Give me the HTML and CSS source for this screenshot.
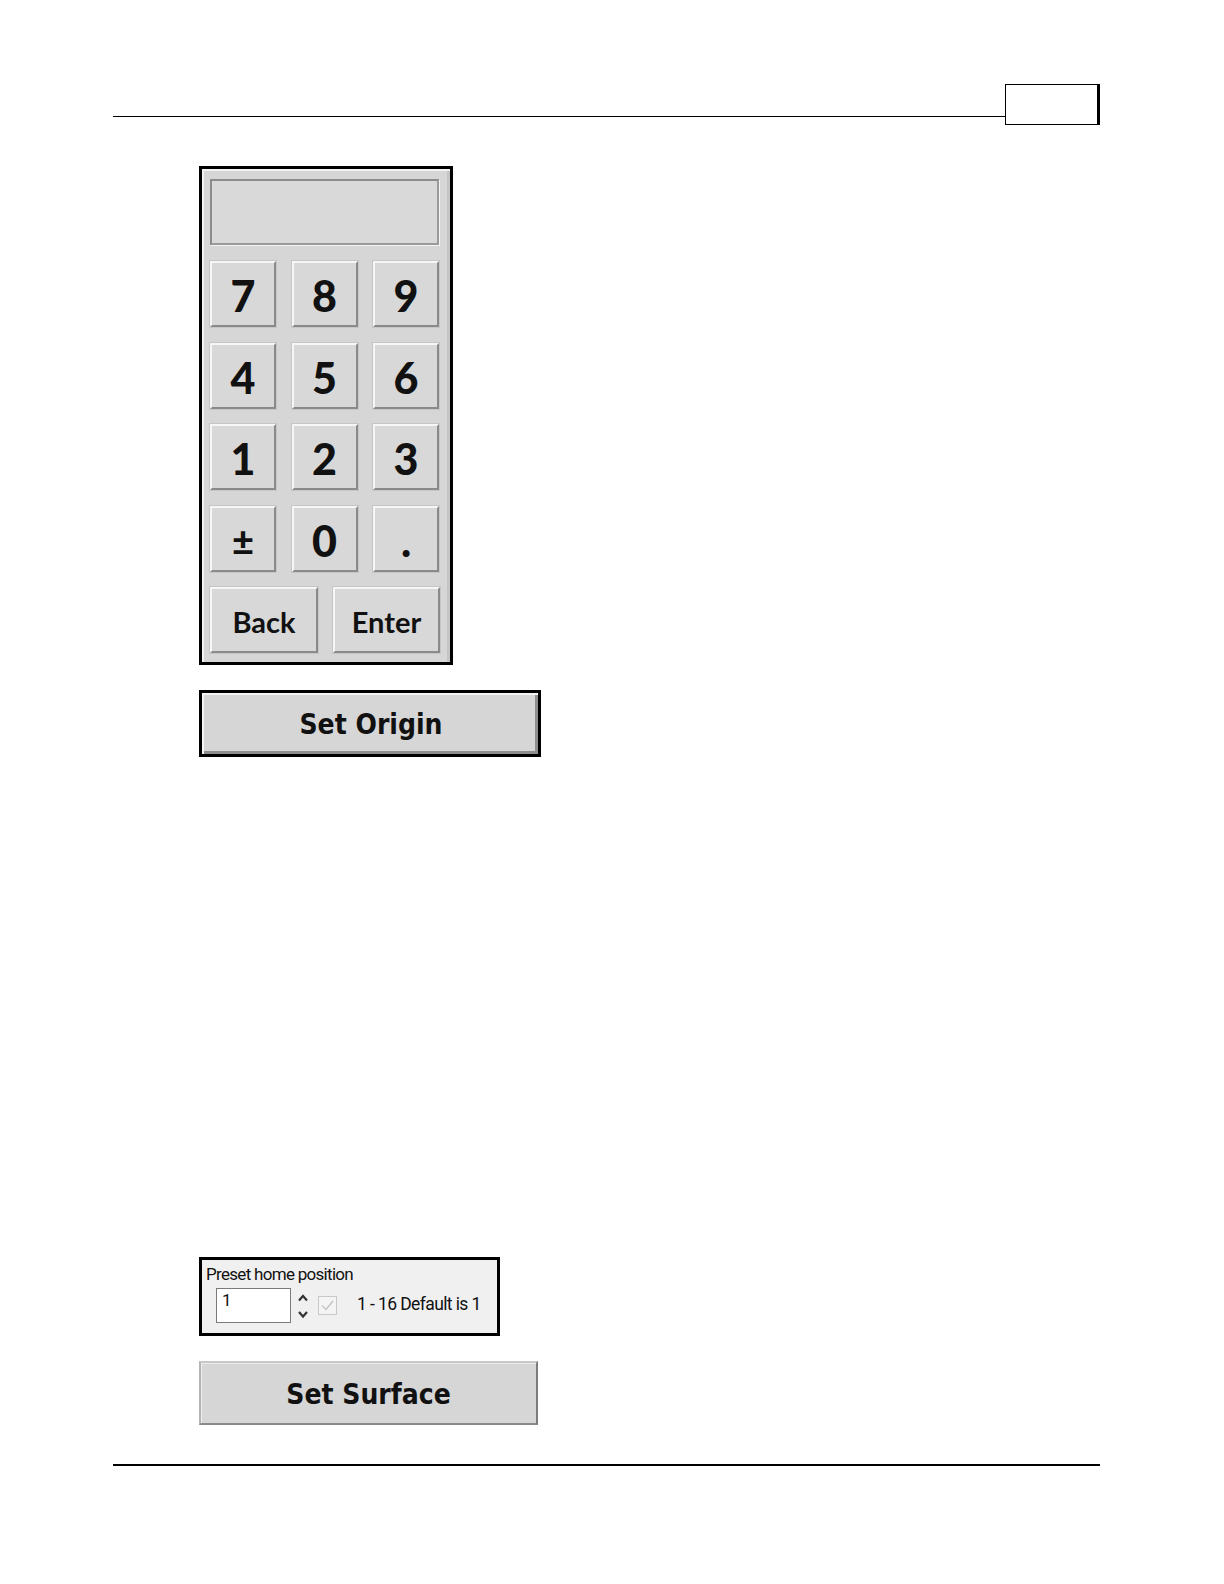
FILE: index.html
```html
<!DOCTYPE html>
<html>
<head>
<meta charset="utf-8">
<link rel="stylesheet" href="styles.css">
</head>
<body>
<div class="page">
  <header class="header">
    <div class="header-line"></div>
    <div class="header-box"></div>
  </header>

  <main class="content">
    <div class="keypad">
      <div class="display"></div>
      <div class="keys">
        <div class="key">7</div>
        <div class="key">8</div>
        <div class="key">9</div>
        <div class="key">4</div>
        <div class="key">5</div>
        <div class="key">6</div>
        <div class="key">1</div>
        <div class="key">2</div>
        <div class="key">3</div>
        <div class="key key-pm">±</div>
        <div class="key">0</div>
        <div class="key">.</div>
      </div>
      <div class="actions">
        <div class="key key-word">Back</div>
        <div class="key key-word">Enter</div>
      </div>
    </div>

    <div class="big-button origin">Set Origin</div>

    <div class="preset">
      <div class="preset-label">Preset home position</div>
      <div class="preset-row">
        <div class="preset-input">1</div>
        <div class="spin">
          <svg width="12" height="30" viewBox="0 0 12 30">
            <path d="M2 9.5 L6 5 L10 9.5" fill="none" stroke="#333" stroke-width="2.2"/>
            <path d="M2 21 L6 25.5 L10 21" fill="none" stroke="#333" stroke-width="2.2"/>
          </svg>
        </div>
        <div class="checkbox">
          <svg width="17" height="17" viewBox="0 0 17 17">
            <path d="M3 8.5 L7 12.5 L14 4" fill="none" stroke="#c4c4c4" stroke-width="1.4"/>
          </svg>
        </div>
        <div class="preset-hint">1 - 16 Default is 1</div>
      </div>
    </div>

    <div class="big-button surface">Set Surface</div>
  </main>

  <footer class="footer"></footer>
</div>
</body>
</html>
```

FILE: styles.css
```css
html, body {
  margin: 0;
  padding: 0;
  background: #ffffff;
  width: 1224px;
  height: 1584px;
  overflow: hidden;
}

.page {
  width: 1224px;
  height: 1584px;
  position: relative;
  overflow: hidden;
  font-family: "Lato", "Liberation Sans", sans-serif;
}

.header {
  display: flex;
  align-items: flex-start;
  padding-top: 84px;
  padding-left: 113px;
}

.header-line {
  width: 892px;
  height: 32px;
  border-bottom: 1.5px solid #000;
}

.header-box {
  width: 91px;
  height: 39px;
  border: 1.5px solid #000;
  border-right-width: 3px;
}

.content {
  margin-left: 199px;
  margin-top: 41px;
  display: flex;
  flex-direction: column;
  align-items: flex-start;
}

.keypad {
  box-sizing: border-box;
  width: 254px;
  height: 499px;
  border: 3px solid #000;
  background: #d6d6d6;
  box-shadow: inset 2px 2px 0 #f2f2f2, inset -3px 0 0 #c4c4c4;
  padding: 10px 11px 0 8px;
}

.display {
  width: 229px;
  height: 66px;
  box-sizing: border-box;
  border: 2px solid #8c8c8c;
  border-right-color: #9a9a9a;
  border-bottom-color: #9a9a9a;
  background: #d9d9d9;
  box-shadow: 1px 1px 0 #f4f4f4;
}

.keys {
  display: grid;
  grid-template-columns: 66px 66px 66px;
  grid-auto-rows: 66px;
  column-gap: 15.5px;
  row-gap: 15.7px;
  margin-top: 16px;
}

.key {
  box-sizing: border-box;
  display: flex;
  align-items: center;
  justify-content: center;
  background: #d8d8d8;
  border: 2px solid;
  border-color: #f6f6f6 #8a8a8a #8a8a8a #f6f6f6;
  box-shadow: 0 0 0 1px #c6c6c6;
  font-family: "Lato", "Liberation Sans", sans-serif;
  font-weight: 900;
  font-size: 43px;
  color: #111111;
  line-height: 1;
  padding-top: 3px;
}

.key-pm {
  font-size: 38px;
}

.actions {
  display: grid;
  grid-template-columns: 108px 107px;
  column-gap: 15px;
  grid-auto-rows: 66px;
  margin-top: 15px;
}

.key-word {
  font-size: 29px;
  font-weight: 700;
  padding-top: 2px;
}

.big-button {
  box-sizing: border-box;
  display: flex;
  align-items: center;
  justify-content: center;
  background: #d6d6d6;
  font-family: "DejaVu Sans Condensed", "DejaVu Sans", sans-serif;
  font-stretch: condensed;
  font-weight: 700;
  color: #111111;
}

.origin {
  margin-top: 25px;
  width: 342px;
  height: 67px;
  border: 3px solid #000;
  box-shadow: inset 2px 2px 0 #f4f4f4, inset -3px -3px 0 #8e8e8e;
  font-size: 28px;
  padding-left: 2px;
  padding-top: 2px;
}

.preset {
  margin-top: 500px;
  width: 301px;
  height: 79px;
  box-sizing: border-box;
  border: 3px solid #000;
  background: #f0f0f0;
  padding: 5px 0 0 4px;
  font-family: "Roboto", "Liberation Sans", sans-serif;
  color: #111;
}

.preset-label {
  font-size: 17px;
  letter-spacing: -0.7px;
  line-height: 19px;
}

.preset-row {
  display: flex;
  align-items: flex-start;
  margin-top: 4px;
  margin-left: 10px;
}

.preset-input {
  width: 75px;
  height: 35px;
  box-sizing: border-box;
  border: 1px solid #7a7a7a;
  background: #fff;
  font-size: 17px;
  line-height: 19px;
  padding: 2px 0 0 5px;
}

.spin {
  margin-left: 6px;
  margin-top: 3px;
  width: 12px;
  height: 30px;
}

.checkbox {
  margin-left: 9px;
  margin-top: 8px;
  width: 19px;
  height: 19px;
  box-sizing: border-box;
  border: 1px solid #c8c8c8;
  background: #f4f4f4;
  display: flex;
  align-items: center;
  justify-content: center;
}

.preset-hint {
  margin-left: 20px;
  margin-top: 6px;
  font-size: 17.5px;
  letter-spacing: -0.6px;
  line-height: 21px;
}

.surface {
  margin-top: 25px;
  width: 339px;
  height: 64px;
  border: 2px solid;
  border-color: #c8c8c8 #7c7c7c #8a8a8a #b4b4b4;
  box-shadow: inset 1px 1px 0 #ececec;
  font-size: 28px;
  padding-top: 2px;
}

.footer {
  position: absolute;
  left: 113px;
  top: 1464px;
  width: 987px;
  height: 0;
  border-top: 2px solid #000;
}
```
